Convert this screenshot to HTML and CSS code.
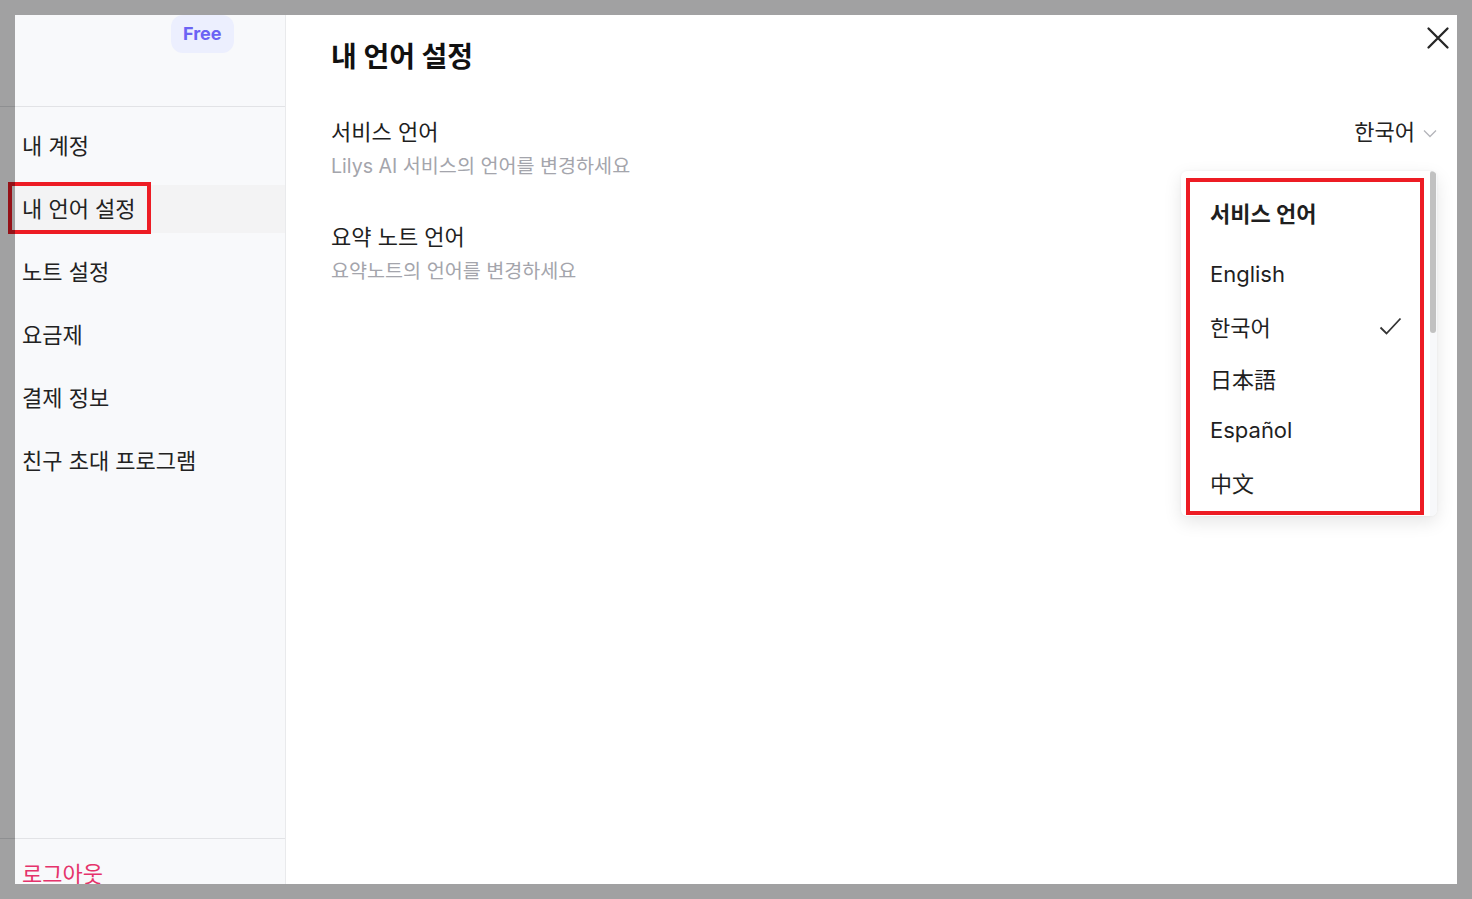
FILE: index.html
```html
<!DOCTYPE html>
<html lang="ko">
<head>
<meta charset="utf-8">
<title>내 언어 설정</title>
<link rel="stylesheet" href="styles.css">
</head>
<body>
<div class="bg-line bg-line-top"></div>
<div class="bg-line bg-line-bottom"></div>

<div class="modal">
  <aside class="sidebar">
    <div class="side-head">
      <span class="badge">Free</span>
    </div>
    <nav class="side-nav">
      <div class="nav-item">내 계정</div>
      <div class="nav-item active">내 언어 설정</div>
      <div class="nav-item">노트 설정</div>
      <div class="nav-item">요금제</div>
      <div class="nav-item">결제 정보</div>
      <div class="nav-item">친구 초대 프로그램</div>
    </nav>
    <div class="side-foot">
      <div class="logout">로그아웃</div>
    </div>
  </aside>

  <main class="content">
    <h1 class="title">내 언어 설정</h1>
    <section class="setting">
      <div class="setting-text">
        <div class="setting-label">서비스 언어</div>
        <div class="setting-desc">Lilys AI 서비스의 언어를 변경하세요</div>
      </div>
      <div class="select">
        <span>한국어</span>
        <svg class="chev" width="14" height="9" viewBox="0 0 14 9"><path d="M1 1.5 L7 7.5 L13 1.5" fill="none" stroke="#b4b5ba" stroke-width="1.3"/></svg>
      </div>
    </section>
    <section class="setting">
      <div class="setting-text">
        <div class="setting-label">요약 노트 언어</div>
        <div class="setting-desc">요약노트의 언어를 변경하세요</div>
      </div>
    </section>

    <button class="close" aria-label="닫기">
      <svg width="24" height="24" viewBox="0 0 24 24"><path d="M2.5 2.5 L21.5 21.5 M21.5 2.5 L2.5 21.5" fill="none" stroke="#262626" stroke-width="2.3" stroke-linecap="round"/></svg>
    </button>

    <div class="dropdown">
      <div class="dd-list">
        <div class="dd-head">서비스 언어</div>
        <div class="dd-item">English</div>
        <div class="dd-item">한국어
          <svg class="check" width="23" height="18" viewBox="0 0 23 18"><path d="M1.5 10.5 L7.5 16.5 L21.5 1.5" fill="none" stroke="#333" stroke-width="1.8"/></svg>
        </div>
        <div class="dd-item" lang="ja">日本語</div>
        <div class="dd-item">Español</div>
        <div class="dd-item" lang="zh">中文</div>
      </div>
      <div class="dd-track"><div class="dd-thumb"></div></div>
    </div>
  </main>
</div>

<div class="mark mark-side"></div>
<div class="mark mark-dd"></div>
</body>
</html>
```
FILE: styles.css
```css
html, body {
  margin: 0;
  padding: 0;
}
body {
  width: 1472px;
  height: 899px;
  overflow: hidden;
  background: #a1a1a2;
  font-family: Inter, "Noto Sans CJK KR", sans-serif;
  color: #1f1f1f;
  position: relative;
  box-sizing: border-box;
  padding: 15px 15px 0 15px;
}

.bg-line {
  position: absolute;
  left: 0;
  width: 15px;
  height: 1px;
  background: #8e8f91;
}
.bg-line-top { top: 106px; }
.bg-line-bottom { top: 838px; }

.modal {
  display: flex;
  width: 1442px;
  height: 869px;
  background: #fff;
  overflow: hidden;
}

/* Sidebar */
.sidebar {
  width: 270px;
  flex: none;
  display: flex;
  flex-direction: column;
  background: #f8f9fb;
  border-right: 1px solid #e9eaec;
}
.side-head {
  height: 92px;
  flex: none;
  border-bottom: 1px solid #e2e3e6;
  padding-left: 156px;
  box-sizing: border-box;
}
.badge {
  display: inline-block;
  height: 38px;
  line-height: 38px;
  padding: 0 12px;
  border-radius: 12px;
  background: #eceffe;
  color: #6b63f4;
  font-weight: 700;
  font-size: 18px;
}
.side-nav {
  flex: 1;
  display: flex;
  flex-direction: column;
  gap: 15px;
  padding-top: 15px;
}
.nav-item {
  height: 48px;
  line-height: 48px;
  padding-left: 7px;
  font-size: 22px;
  color: #222;
}
.nav-item.active {
  background: #f3f3f4;
}
.side-foot {
  height: 46px;
  flex: none;
  border-top: 1px solid #e2e3e6;
  padding-top: 22px;
  box-sizing: border-box;
}
.logout {
  padding-left: 7px;
  font-size: 22px;
  line-height: 26px;
  color: #e5336b;
  white-space: nowrap;
}

/* Content */
.content {
  flex: 1;
  position: relative;
  padding: 24px 20px 0 45px;
}
.title {
  margin: 0 0 42px 0;
  font-size: 28px;
  line-height: 36px;
  font-weight: 700;
  color: #111;
}
.setting {
  display: flex;
  justify-content: space-between;
  align-items: flex-start;
  margin-bottom: 43px;
}
.setting-label {
  font-size: 22px;
  line-height: 30px;
  color: #1f1f1f;
}
.setting-desc {
  font-size: 19.6px;
  line-height: 26px;
  margin-top: 6px;
  color: #a4a5ac;
}
.select {
  display: flex;
  align-items: center;
  gap: 8px;
  font-size: 22px;
  line-height: 30px;
  color: #222;
}
.chev {
  margin-top: 2px;
}

.close {
  position: absolute;
  top: 11px;
  right: 7px;
  width: 24px;
  height: 24px;
  padding: 0;
  border: 0;
  background: none;
  display: block;
}
.close svg { display: block; }

.dropdown {
  position: absolute;
  left: 895px;
  top: 156px;
  width: 256px;
  height: 345px;
  background: #fff;
  border-radius: 6px;
  box-shadow: 0 6px 18px rgba(0, 0, 0, 0.10), 0 0 3px rgba(0, 0, 0, 0.05);
  display: flex;
  overflow: hidden;
}
.dd-list {
  flex: 1;
  padding: 29px 29px 0 29px;
}
.dd-head {
  font-size: 22px;
  line-height: 28px;
  font-weight: 700;
  color: #1f1f1f;
  margin-bottom: 20px;
}
.dd-item {
  height: 52px;
  display: flex;
  align-items: center;
  justify-content: space-between;
  font-size: 22px;
  color: #1f1f1f;
}
.dd-item[lang="ja"] {
  font-family: Inter, "Noto Sans CJK JP", sans-serif;
}
.dd-item[lang="zh"] {
  font-family: Inter, "Noto Sans CJK SC", sans-serif;
}
.check {
  margin-right: -1px;
}
.dd-track {
  width: 7px;
  flex: none;
  background: #f7f8fa;
}
.dd-thumb {
  width: 6px;
  height: 162px;
  border-radius: 3px;
  background: #c1c1c1;
}

/* Annotation boxes */
.mark {
  position: absolute;
  border: 4px solid #ed1c24;
  box-sizing: border-box;
}
.mark-side {
  left: 8px;
  top: 182px;
  width: 143px;
  height: 52px;
}
.mark-side::before {
  content: "";
  position: absolute;
  left: -4px;
  top: -4px;
  width: 7px;
  height: 52px;
  border-top: 4px solid #951117;
  border-bottom: 4px solid #951117;
  border-left: 4px solid #951117;
  box-sizing: border-box;
}
.mark-dd {
  left: 1186px;
  top: 178px;
  width: 238px;
  height: 337px;
}
```
